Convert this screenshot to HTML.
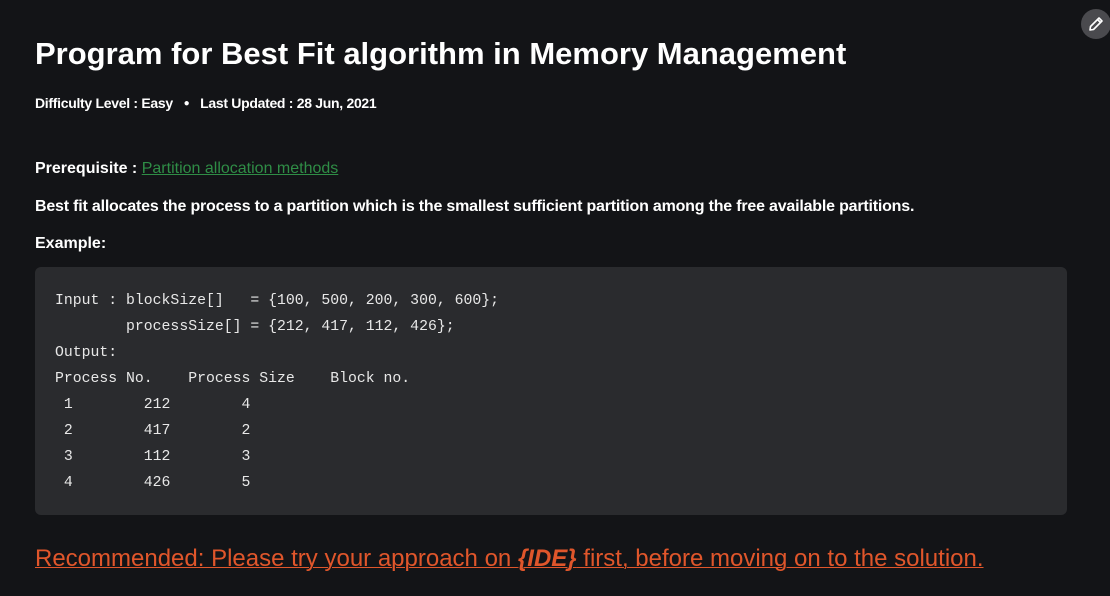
<!DOCTYPE html>
<html><head><meta charset="utf-8"><style>
body{margin:0;background:#131417;width:1110px;height:596px;overflow:hidden;font-family:"Liberation Sans",sans-serif;color:#fff;position:relative}
.t{position:absolute;left:35px;white-space:nowrap}
h1{margin:0;font-size:31px;font-weight:bold;top:36px;letter-spacing:0px}
.meta{top:95px;font-size:14px;font-weight:bold;letter-spacing:-0.3px}
.p{font-size:16px;color:#fff}
a{color:#2f8d46;text-decoration:underline}
.code{position:absolute;left:35px;top:267px;width:1032px;height:248px;background:#2a2b2e;border-radius:6px}
.code pre{margin:0;position:absolute;left:20px;top:21px;font-family:"Liberation Mono",monospace;font-size:14.8px;line-height:26px;color:#e8e8e8}
.rec{top:545px;font-size:24px;color:#e0562b;text-decoration:underline;text-decoration-thickness:1px;letter-spacing:0px}
.ic{position:absolute;left:1081px;top:9px;width:30px;height:30px;border-radius:50%;background:#4a4a4e}
</style></head><body>
<div class="ic"><svg width="30" height="30" viewBox="0 0 30 30"><path d="M9 21 L9.5 17.5 L18 9 L21 12 L12.5 20.5 Z M16.5 10.5 L19.5 13.5" fill="none" stroke="#fff" stroke-width="1.6" stroke-linejoin="round"/></svg></div>
<h1 class="t">Program for Best Fit algorithm in Memory Management</h1>
<div class="t meta">Difficulty Level : Easy &nbsp;&nbsp;<span style="font-size:10px;vertical-align:2px">●</span>&nbsp;&nbsp; Last Updated : 28 Jun, 2021</div>
<div class="t p" style="top:160px"><b>Prerequisite :</b> <a>Partition allocation methods</a></div>
<div class="t p" style="top:198px;font-weight:bold;letter-spacing:-0.2px">Best fit allocates the process to a partition which is the smallest sufficient partition among the free available partitions.</div>
<div class="t p" style="top:235px;font-weight:bold">Example:</div>
<div class="code"><pre>Input : blockSize[]   = {100, 500, 200, 300, 600};
        processSize[] = {212, 417, 112, 426};
Output:
Process No.    Process Size    Block no.
 1        212        4
 2        417        2
 3        112        3
 4        426        5</pre></div>
<div class="t rec">Recommended: Please try your approach on <b><i>{IDE}</i></b> first, before moving on to the solution.</div>
</body></html>
